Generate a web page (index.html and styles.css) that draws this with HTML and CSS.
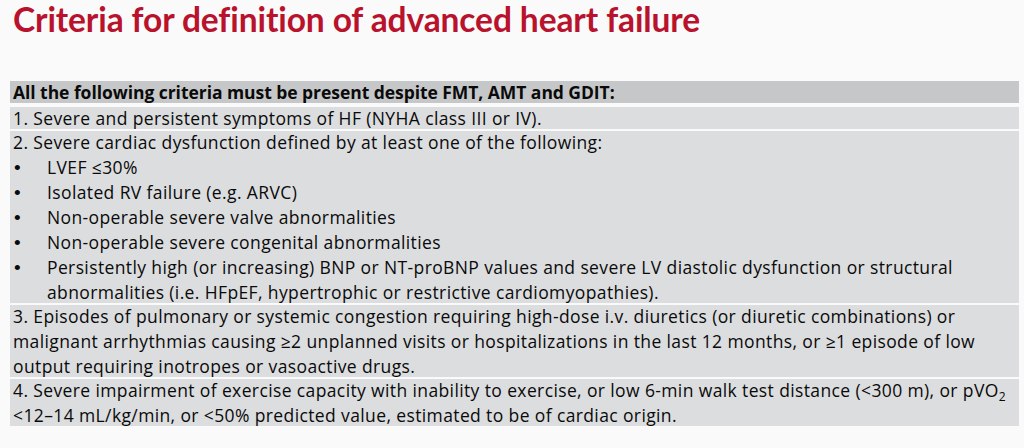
FILE: index.html
```html
<!DOCTYPE html>
<html lang="en">
<head>
<meta charset="utf-8">
<title>Criteria for definition of advanced heart failure</title>
<link rel="stylesheet" href="styles.css">
</head>
<body>
<main class="slide">
  <h1 class="title">Criteria for definition of advanced heart failure</h1>
  <section class="criteria">
    <div class="row row-head"><p>All the following criteria must be present despite FMT, AMT and GDIT:</p></div>
    <div class="row row-gap-lg"><p>1. Severe and persistent symptoms of HF (NYHA class III or IV).</p></div>
    <div class="row">
      <p>2. Severe cardiac dysfunction defined by at least one of the following:</p>
      <ul class="bullets">
        <li>LVEF ≤30%</li>
        <li>Isolated RV failure (e.g. ARVC)</li>
        <li>Non-operable severe valve abnormalities</li>
        <li>Non-operable severe congenital abnormalities</li>
        <li>Persistently high (or increasing) BNP or NT-proBNP values and severe LV diastolic dysfunction or structural abnormalities (i.e. HFpEF, hypertrophic or restrictive cardiomyopathies).</li>
      </ul>
    </div>
    <div class="row"><p>3. Episodes of pulmonary or systemic congestion requiring high-dose i.v. diuretics (or diuretic combinations) or malignant arrhythmias causing ≥2 unplanned visits or hospitalizations in the last 12 months, or ≥1 episode of low output requiring inotropes or vasoactive drugs.</p></div>
    <div class="row"><p>4. Severe impairment of exercise capacity with inability to exercise, or low 6-min walk test distance (&lt;300 m), or pVO<sub>2</sub> &lt;12–14 mL/kg/min, or &lt;50% predicted value, estimated to be of cardiac origin.</p></div>
  </section>
</main>
</body>
</html>
```

FILE: styles.css
```css
html, body {
  margin: 0;
  padding: 0;
  background: #fafafa;
}

body {
  font-family: "Open Sans", "Lato", sans-serif;
  color: #0a0a0a;
}

.slide {
  width: 1024px;
  height: 448px;
  overflow: hidden;
}

.title {
  margin: 0;
  padding: 0 0 0 13px;
  height: 81px;
  font-family: "Lato", "Open Sans", sans-serif;
  font-size: 33.5px;
  line-height: 38px;
  font-weight: 700;
  color: #b8122d;
  letter-spacing: -0.1px;
}

.criteria {
  margin-left: 10px;
  width: 1009px;
  display: flex;
  flex-direction: column;
  gap: 2px;
}

.row {
  background: #dcdddf;
  padding: 0 3px;
  font-size: 17.5px;
  line-height: 25px;
  letter-spacing: 0.38px;
  overflow: hidden;
}

.row p,
.row ul {
  margin: 0;
}

.row > :first-child {
  margin-top: -1px;
}

.row > :last-child {
  margin-bottom: -2px;
}

.row-head {
  background: #c6c7c9;
  font-weight: 700;
  letter-spacing: -0.05px;
}

.row-gap-lg {
  margin-top: 2px;
}

.bullets {
  list-style: none;
  padding: 0;
}

.bullets li {
  position: relative;
  padding-left: 34px;
}

.bullets li::before {
  content: "•";
  position: absolute;
  left: 1px;
  top: 0;
  font-family: "Liberation Sans", sans-serif;
  font-size: 19px;
}

sub {
  font-size: 12px;
  line-height: 0;
  vertical-align: -4px;
  letter-spacing: 0;
}
```
